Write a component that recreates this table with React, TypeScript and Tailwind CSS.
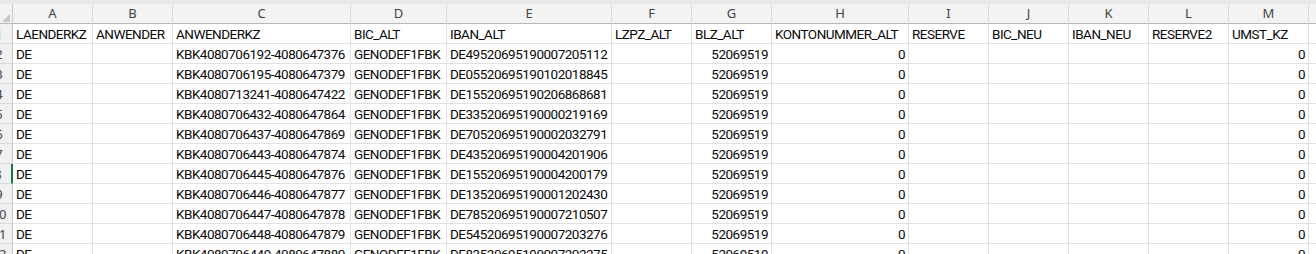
const cols = ['A', 'B', 'C', 'D', 'E', 'F', 'G', 'H', 'I', 'J', 'K', 'L', 'M', 'N']

const header = [
  'LAENDERKZ',
  'ANWENDER',
  'ANWENDERKZ',
  'BIC_ALT',
  'IBAN_ALT',
  'LZPZ_ALT',
  'BLZ_ALT',
  'KONTONUMMER_ALT',
  'RESERVE',
  'BIC_NEU',
  'IBAN_NEU',
  'RESERVE2',
  'UMST_KZ',
  '',
]

const data: [string, string][] = [
  ['KBK4080706192-4080647376', 'DE49520695190007205112'],
  ['KBK4080706195-4080647379', 'DE05520695190102018845'],
  ['KBK4080713241-4080647422', 'DE15520695190206868681'],
  ['KBK4080706432-4080647864', 'DE33520695190000219169'],
  ['KBK4080706437-4080647869', 'DE70520695190002032791'],
  ['KBK4080706443-4080647874', 'DE43520695190004201906'],
  ['KBK4080706445-4080647876', 'DE15520695190004200179'],
  ['KBK4080706446-4080647877', 'DE13520695190001202430'],
  ['KBK4080706447-4080647878', 'DE78520695190007210507'],
  ['KBK4080706448-4080647879', 'DE54520695190007203276'],
  ['KBK4080706449-4080647880', 'DE83520695190007202275'],
]

const grid =
  'grid grid-cols-[13px_80px_80px_178px_96px_165px_80px_80px_137px_80px_80px_80px_80px_80px_80px]'

function Cell({ value, right }: { value?: string; right?: boolean }) {
  return (
    <div
      className={`h-5 border-r border-b border-[#e1e1e1] flex items-center overflow-hidden whitespace-nowrap px-[3px] pt-px text-[13.5px] tracking-[-0.5px] text-[#0a0a0a] ${
        right ? 'justify-end' : 'justify-start'
      }`}
    >
      {value}
    </div>
  )
}

function RowHead({ n, active }: { n: number; active?: boolean }) {
  return (
    <div
      className={`h-5 bg-[#f0f0f0] border-b border-[#d9d9d9] flex justify-end overflow-hidden ${
        active ? 'border-r-2 border-r-[#107c41]' : 'border-r border-r-[#c8c8c8]'
      }`}
    >
      <span
        className="w-[26px] shrink-0 text-center text-[13px] leading-5 text-[#444]"
        style={{ fontFamily: '"Noto Sans", sans-serif' }}
      >
        {n}
      </span>
    </div>
  )
}

export default function App() {
  return (
    <div
      className="w-[1316px] h-[254px] overflow-hidden bg-white"
      style={{ fontFamily: 'Roboto, "Liberation Sans", sans-serif' }}
    >
      <div className="h-1 bg-[#e6e8eb]" />
      <div className={`${grid} h-5 bg-[#f3f3f3] border-b border-[#b8b8b8]`}>
        <div className="border-r border-[#c8c8c8] relative overflow-hidden">
          <div className="absolute right-[2px] bottom-[2px] w-0 h-0 border-l-[8px] border-l-transparent border-b-[8px] border-b-[#c6c6c6]" />
        </div>
        {cols.map((c) => (
          <div
            key={c}
            className="border-r border-[#dadada] flex items-center justify-center text-[13px] text-[#444]"
            style={{ fontFamily: '"Noto Sans", sans-serif' }}
          >
            {c}
          </div>
        ))}
      </div>

      <div className={grid}>
        <RowHead n={1} />
        {header.map((h, i) => (
          <Cell key={i} value={h} />
        ))}
      </div>

      {data.map(([kz, iban], i) => (
        <div key={i} className={grid}>
          <RowHead n={i + 2} active={i + 2 === 8} />
          <Cell value="DE" />
          <Cell />
          <Cell value={kz} />
          <Cell value="GENODEF1FBK" />
          <Cell value={iban} />
          <Cell />
          <Cell value="52069519" right />
          <Cell value="0" right />
          <Cell />
          <Cell />
          <Cell />
          <Cell />
          <Cell value="0" right />
          <Cell />
        </div>
      ))}
    </div>
  )
}
